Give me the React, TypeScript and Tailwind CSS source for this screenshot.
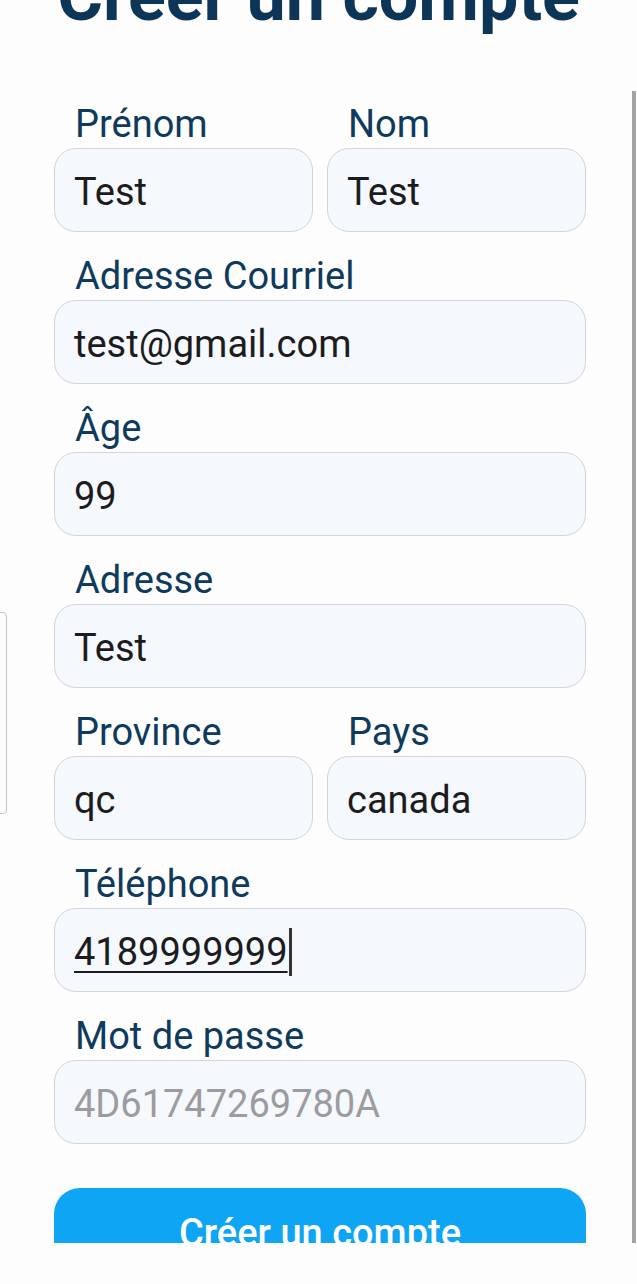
import React from "react";

const font = { fontFamily: "Roboto, 'Noto Sans', sans-serif" };

function Label({ children }: { children: React.ReactNode }) {
  return (
    <div className="mb-[2px] pl-[21px] pt-[2px] text-[38px] leading-[44px] text-[#0f3a5c]">
      {children}
    </div>
  );
}

function Field({
  label,
  value,
  muted,
  children,
}: {
  label: string;
  value?: string;
  muted?: boolean;
  children?: React.ReactNode;
}) {
  return (
    <div className="flex flex-col">
      <Label>{label}</Label>
      <div className="flex h-[84px] items-center rounded-[22px] border-[1.5px] border-[#d4d4da] bg-[#f5f8fd] px-[19px] pt-[4px]">
        {children ?? (
          <span className={"text-[38px] leading-none " + (muted ? "text-[#9c9c9e]" : "text-[#1c1c20]")}>
            {value}
          </span>
        )}
      </div>
    </div>
  );
}

export default function App() {
  return (
    <div className="relative h-[1284px] w-[637px] overflow-hidden bg-[#fdfdfd]" style={font}>
      <div className="h-[1243px] overflow-hidden">
        <div className="mt-[-38px] flex flex-col">
          <h1 className="text-center text-[70px] font-bold leading-[68px] text-[#0c3557]">
            Créer un compte
          </h1>

          <div className="mt-[70px] flex flex-col gap-[20px] pl-[54px] pr-[51px]">
            <div className="grid grid-cols-2 gap-[14px]">
              <Field label="Prénom" value="Test" />
              <Field label="Nom" value="Test" />
            </div>
            <Field label="Adresse Courriel" value="test@gmail.com" />
            <Field label="Âge" value="99" />
            <Field label="Adresse" value="Test" />
            <div className="grid grid-cols-2 gap-[14px]">
              <Field label="Province" value="qc" />
              <Field label="Pays" value="canada" />
            </div>
            <Field label="Téléphone">
              <span className="text-[38px] leading-none text-[#1c1c20] underline decoration-[2px] underline-offset-[6px]">
                4189999999
              </span>
              <span className="ml-[1px] h-[48px] w-[3px] bg-[#333]" />
            </Field>
            <Field label="Mot de passe" value="4D61747269780A" muted />

            <button className="mt-[24px] h-[96px] rounded-[26px] bg-[#0ea5f5] pb-[6px] text-[38px] font-medium text-white">
              Créer un compte
            </button>
          </div>
        </div>
      </div>

      {/* scrollbar */}
      <div className="absolute right-[1px] top-[91px] h-[1152px] w-[4px] bg-[#a3a3a3]" />
      {/* side handle */}
      <div className="absolute left-[-10px] top-[612px] h-[202px] w-[17px] rounded-[4px] border-[1.5px] border-[#c4c4c4]" />
    </div>
  );
}
